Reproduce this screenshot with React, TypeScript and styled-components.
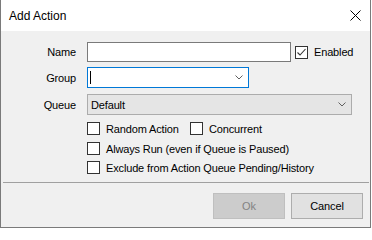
import React from "react";
import styled, { createGlobalStyle } from "styled-components";

const GlobalStyle = createGlobalStyle`
  html, body {
    margin: 0;
    padding: 0;
    background: #ffffff;
  }
  body {
    font-family: "Liberation Sans", Arial, sans-serif;
    font-size: 11px;
    letter-spacing: -0.15px;
    color: #000;
  }
`;

const Window = styled.div`
  width: 371px;
  height: 228px;
  box-sizing: border-box;
  display: flex;
  flex-direction: column;
  border: 1px solid #7a7a7a;
  border-top: none;
  background: #f0f0f0;
`;

const TitleBar = styled.div`
  height: 31px;
  flex-shrink: 0;
  display: flex;
  align-items: center;
  justify-content: space-between;
  padding: 0 9px 0 8px;
  background: #ffffff;
  font-size: 12px;
  letter-spacing: 0;
`;

const CloseButton = styled.div`
  width: 11px;
  height: 11px;
  display: flex;
  margin-top: -1px;
`;

const Body = styled.div`
  flex: 1;
  display: flex;
  flex-direction: column;
`;

const Row = styled.div<{ $top: number; $height: number }>`
  display: flex;
  align-items: center;
  margin-top: ${({ $top }) => $top}px;
  height: ${({ $height }) => $height}px;
`;

const Label = styled.div`
  width: 75px;
  padding-right: 11px;
  text-align: right;
`;

const Indent = styled.div`
  width: 86px;
  flex-shrink: 0;
`;

const Spacer = styled.div<{ $width: number }>`
  width: ${({ $width }) => $width}px;
  flex-shrink: 0;
`;

const TextBox = styled.div<{ $width: number }>`
  width: ${({ $width }) => $width}px;
  height: 100%;
  box-sizing: border-box;
  border: 1px solid #7a7a7a;
  background: #ffffff;
`;

const Combo = styled.div<{ $width: number; $focused?: boolean; $readOnly?: boolean }>`
  width: ${({ $width }) => $width}px;
  height: 100%;
  box-sizing: border-box;
  display: flex;
  align-items: center;
  justify-content: space-between;
  padding: 0 5px 0 3px;
  border: 1px solid ${({ $focused }) => ($focused ? "#0078d7" : "#acacac")};
  background: ${({ $readOnly }) => ($readOnly ? "#e5e5e5" : "#ffffff")};
`;

const Caret = styled.div`
  width: 1px;
  height: 13px;
  margin-left: -1px;
  background: #000;
`;

const CheckItem = styled.div<{ $width?: number }>`
  display: flex;
  align-items: center;
  gap: 6px;
  width: ${({ $width }) => ($width ? `${$width}px` : "auto")};
`;

const Box = styled.div`
  width: 13px;
  height: 13px;
  box-sizing: border-box;
  border: 1px solid #333333;
  background: #ffffff;
  display: flex;
  align-items: center;
  justify-content: center;
`;

const Separator = styled.div`
  height: 1px;
  margin: 8px 1px 0 2px;
  background: #a0a0a0;
`;

const ButtonBar = styled.div`
  display: flex;
  justify-content: flex-end;
  gap: 6px;
  margin-top: 10px;
  padding-right: 7px;
`;

const Button = styled.div<{ $disabled?: boolean }>`
  width: 72px;
  height: 26px;
  box-sizing: border-box;
  display: flex;
  align-items: center;
  justify-content: center;
  border: 1px solid ${({ $disabled }) => ($disabled ? "#bfbfbf" : "#adadad")};
  background: ${({ $disabled }) => ($disabled ? "#cccccc" : "#e1e1e1")};
  color: ${({ $disabled }) => ($disabled ? "#838383" : "#000000")};
`;

const Chevron = () => (
  <svg width="8" height="5" viewBox="0 0 8 5">
    <polyline points="0.5,0.5 4,4 7.5,0.5" fill="none" stroke="#606060" strokeWidth="1" />
  </svg>
);

const Check: React.FC<{ checked?: boolean; label: string; width?: number }> = ({ checked, label, width }) => (
  <CheckItem $width={width}>
    <Box>
      {checked && (
        <svg width="11" height="11" viewBox="0 0 11 11">
          <polyline points="1.5,5.5 4,8 9.5,2" fill="none" stroke="#333" strokeWidth="1.1" />
        </svg>
      )}
    </Box>
    <span>{label}</span>
  </CheckItem>
);

const App: React.FC = () => {
  return (
    <>
      <GlobalStyle />
      <Window>
        <TitleBar>
          <span>Add Action</span>
          <CloseButton>
            <svg width="11" height="11" viewBox="0 0 11 11">
              <path d="M0.5 0.5 L10.5 10.5 M10.5 0.5 L0.5 10.5" stroke="#000" strokeWidth="1" />
            </svg>
          </CloseButton>
        </TitleBar>
        <Body>
          <Row $top={11} $height={20}>
            <Label>Name</Label>
            <TextBox $width={204} />
            <Spacer $width={4} />
            <Check checked label="Enabled" />
          </Row>
          <Row $top={5} $height={21}>
            <Label>Group</Label>
            <Combo $width={162} $focused>
              <Caret />
              <Chevron />
            </Combo>
          </Row>
          <Row $top={6} $height={21}>
            <Label>Queue</Label>
            <Combo $width={265} $readOnly>
              <span>Default</span>
              <Chevron />
            </Combo>
          </Row>
          <Row $top={7} $height={13}>
            <Indent />
            <Check label="Random Action" width={103} />
            <Check label="Concurrent" />
          </Row>
          <Row $top={7} $height={13}>
            <Indent />
            <Check label="Always Run (even if Queue is Paused)" />
          </Row>
          <Row $top={6} $height={13}>
            <Indent />
            <Check label="Exclude from Action Queue Pending/History" />
          </Row>
          <Separator />
          <ButtonBar>
            <Button $disabled>Ok</Button>
            <Button>Cancel</Button>
          </ButtonBar>
        </Body>
      </Window>
    </>
  );
};

export default App;
